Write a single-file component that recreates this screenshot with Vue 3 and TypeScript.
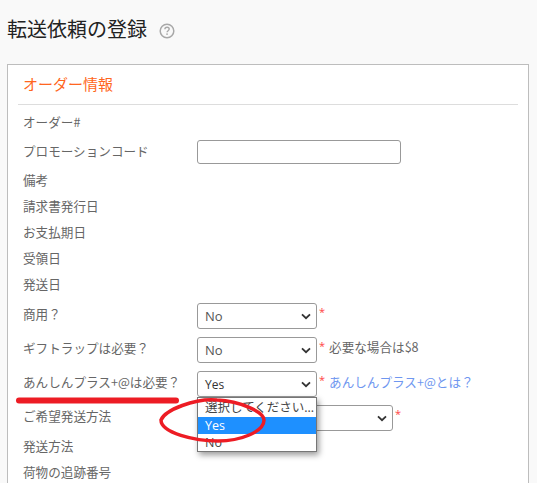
<script setup lang="ts">
const infoRows: string[] = ['備考', '請求書発行日', 'お支払期日', '受領日', '発送日']
</script>

<template>
  <div class="page">
    <h1 class="title">
      転送依頼の登録
      <svg class="help" viewBox="0 0 16 16" width="16" height="16" aria-hidden="true">
        <circle cx="8" cy="8" r="6.8" fill="none" stroke="#a8a8a8" stroke-width="1.5" />
        <path d="M5.9 6.3c0-1.3 1-2 2.2-2s2.1.8 2.1 1.8c0 1.6-2.1 1.6-2.1 3.2" fill="none" stroke="#a8a8a8" stroke-width="1.4" />
        <rect x="7.3" y="10.4" width="1.5" height="1.5" fill="#a8a8a8" />
      </svg>
    </h1>

    <section class="panel">
      <h2 class="heading">オーダー情報</h2>

      <div class="row text-row"><span class="label">オーダー#</span></div>
      <div class="row promo-row">
        <span class="label">プロモーションコード</span>
        <div class="input"></div>
      </div>
      <div v-for="r in infoRows" :key="r" class="row text-row"><span class="label">{{ r }}</span></div>

      <div class="row select-row">
        <span class="label">商用？</span>
        <div class="select short"><span>No</span>
          <svg class="chev" viewBox="0 0 12 8" width="10" height="7"><path d="M1.2 1.5 6 6l4.8-4.5" fill="none" stroke="#333" stroke-width="2.2" /></svg>
        </div>
        <span class="req">*</span>
      </div>
      <div class="row select-row">
        <span class="label">ギフトラップは必要？</span>
        <div class="select short"><span>No</span>
          <svg class="chev" viewBox="0 0 12 8" width="10" height="7"><path d="M1.2 1.5 6 6l4.8-4.5" fill="none" stroke="#333" stroke-width="2.2" /></svg>
        </div>
        <span class="req">*</span>
        <span class="note">必要な場合は$8</span>
      </div>
      <div class="row select-row">
        <span class="label">あんしんプラス+@は必要？</span>
        <div class="select short open"><span class="dark">Yes</span>
          <svg class="chev" viewBox="0 0 12 8" width="10" height="7"><path d="M1.2 1.5 6 6l4.8-4.5" fill="none" stroke="#333" stroke-width="2.2" /></svg>
          <ul class="menu">
            <li class="first">選択してください...</li>
            <li class="active">Yes</li>
            <li>No</li>
          </ul>
        </div>
        <span class="req">*</span>
        <a class="link">あんしんプラス+@とは？</a>
      </div>
      <div class="row select-row">
        <span class="label">ご希望発送方法</span>
        <div class="select long"><span></span>
          <svg class="chev" viewBox="0 0 12 8" width="10" height="7"><path d="M1.2 1.5 6 6l4.8-4.5" fill="none" stroke="#333" stroke-width="2.2" /></svg>
        </div>
        <span class="req">*</span>
      </div>
      <div class="row text-row"><span class="label">発送方法</span></div>
      <div class="row text-row"><span class="label">荷物の追跡番号</span></div>
    </section>

    <svg class="marks" viewBox="0 0 537 483" width="537" height="483" aria-hidden="true">
      <path d="M19 400.5 L176 400.5" stroke="#ed1c24" stroke-width="6" stroke-linecap="round" fill="none" />
      <path d="M161 420 C165 410 195 398 217 400 C240 401 264 412 264 420 C264 432 240 441 218 441 C195 441 161 433 161 420Z" stroke="#ed1c24" stroke-width="3.5" fill="none" />
    </svg>
  </div>
</template>

<style scoped>
.page {
  position: relative;
  width: 537px;
  height: 483px;
  overflow: hidden;
  background: #f9f9f9;
  font-family: "Noto Sans CJK JP", "Open Sans", sans-serif;
  font-size: 12.6px;
  color: #666;
}
.title {
  margin: 0;
  padding: 14px 0 0 7px;
  height: 64px;
  box-sizing: border-box;
  font-size: 20px;
  line-height: 30px;
  font-weight: 400;
  color: #222;
  display: flex;
  align-items: flex-start;
  gap: 12px;
}
.help {
  margin-top: 9px;
}
.panel {
  margin-left: 7px;
  width: 522px;
  height: 440px;
  box-sizing: border-box;
  background: #fff;
  border: 1px solid #bdbdbd;
  padding: 0 10px;
}
.heading {
  margin: 0;
  height: 39px;
  line-height: 38px;
  padding-left: 5px;
  font-size: 15px;
  font-weight: 400;
  color: #ff6620;
  border-bottom: 1px solid #ddd;
}
.row {
  display: flex;
  padding-left: 5px;
}
.text-row {
  height: 26px;
  align-items: center;
}
.heading + .text-row {
  margin-top: 5px;
}
.promo-row {
  height: 32px;
  align-items: center;
}
.select-row {
  height: 34px;
  padding-top: 5px;
  box-sizing: border-box;
  align-items: flex-start;
}
.label {
  width: 174px;
  flex: none;
  line-height: 20px;
  padding-bottom: 2px;
}
.select-row .label {
  line-height: 22px;
  padding-bottom: 0;
}
.input {
  width: 204px;
  height: 24px;
  box-sizing: border-box;
  border: 1px solid #999;
  border-radius: 3px;
  background: #fff;
}
.select {
  position: relative;
  height: 26px;
  box-sizing: border-box;
  border: 1px solid #999;
  border-radius: 3px;
  background: #fff;
  display: flex;
  align-items: center;
  justify-content: space-between;
  padding: 0 5px 0 7px;
  font-family: "Open Sans", "Noto Sans CJK JP", sans-serif;
  font-size: 13px;
  color: #555;
}
.short {
  width: 120px;
}
.long {
  width: 196px;
}
.dark {
  color: #333;
  font-size: 12px;
}
.req {
  color: #f44;
  margin: 2px 0 0 2px;
  line-height: 14px;
  font-family: "Open Sans", sans-serif;
  font-size: 11px;
}
.note {
  margin-left: 4px;
  line-height: 20px;
}
.link {
  margin-left: 4px;
  line-height: 22px;
  color: #6f97f0;
}
.menu {
  position: absolute;
  z-index: 2;
  left: -1px;
  top: 25px;
  width: 120px;
  height: 55px;
  box-sizing: border-box;
  margin: 0;
  padding: 0;
  list-style: none;
  background: #fff;
  border: 1px solid #767676;
  box-shadow: 2px 3px 6px rgba(0, 0, 0, 0.4);
  color: #444;
  font-size: 12.5px;
}
.menu li {
  height: 17px;
  line-height: 17px;
  padding-left: 7px;
  white-space: nowrap;
  overflow: hidden;
}
.menu .first {
  height: 19px;
  line-height: 20px;
}
.menu .active {
  background: #1e90ff;
  color: #fff;
}
.marks {
  position: absolute;
  z-index: 3;
  left: 0;
  top: 0;
  pointer-events: none;
}
</style>

<style>
html, body {
  margin: 0;
  overflow: hidden;
}
</style>
